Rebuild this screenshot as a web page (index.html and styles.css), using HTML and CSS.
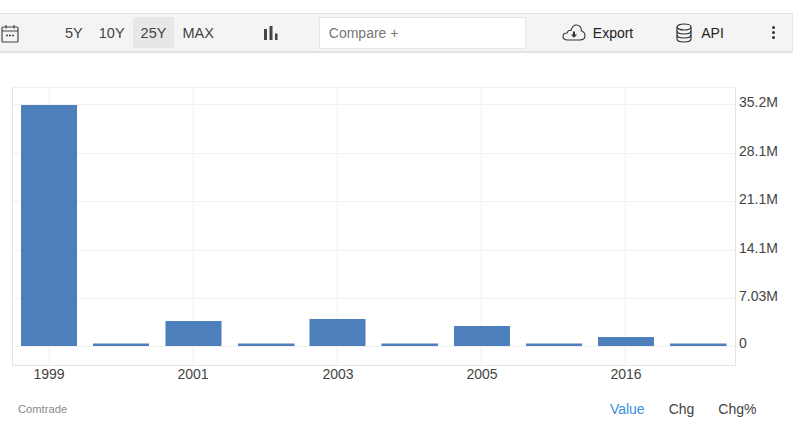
FILE: index.html
```html
<!DOCTYPE html>
<html lang="en">
<head>
    <meta charset="UTF-8">
    <title>Chart</title>
    <link rel="stylesheet" href="styles.css">
</head>
<body>
    <div class="toolbar">
        <svg class="icon-calendar" width="18" height="19" viewBox="0 0 18 19" fill="none" stroke="#444" stroke-width="1.2">
            <rect x="1" y="3" width="16" height="15" rx="1"/>
            <path d="M1 7h16M5 1v3.500M13 1v3.500"/>
            <path d="M5 11.500h2M8 11.500h2M11 11.500h2" stroke-width="1.400"/>
        </svg>
        <div class="ranges">
            <button class="range">5Y</button>
            <button class="range">10Y</button>
            <button class="range active">25Y</button>
            <button class="range">MAX</button>
        </div>
        <svg class="icon-bars" width="14" height="14" viewBox="0 0 14 14" fill="#444">
            <rect x="0" y="3" width="3" height="11"/>
            <rect x="5.500" y="0" width="3" height="14"/>
            <rect x="11" y="7.500" width="2.500" height="6.500"/>
        </svg>
        <input class="compare" type="text" placeholder="Compare +">
        <div class="tool tool-export">
            <svg width="24" height="17" viewBox="0 0 24 17" fill="none" stroke="#333" stroke-width="1.100">
                <path d="M5.500 16C2.800 16 1 14.500 1 12.500 1 10.500 2.800 9 5 9 5.800 6.800 7.600 6 9 6.400 10 3 12 1 14.400 1 17.400 1 19.600 3.400 19.400 6.800 21.600 7.800 23 9.600 23 11.600 23 14.200 21 16 18 16Z"/>
                <path d="M12 7.500v3.500" stroke-width="2"/>
                <path d="M8.800 10.400H15.200L12 13.800Z" fill="#333" stroke="none"/>
            </svg>
            <span>Export</span>
        </div>
        <div class="tool tool-api">
            <svg width="16" height="20" viewBox="0 0 16 20" fill="none" stroke="#333" stroke-width="1.200">
                <ellipse cx="8" cy="4" rx="7" ry="3"/>
                <path d="M1 4v12c0 1.700 3.100 3 7 3s7-1.300 7-3V4"/>
                <path d="M1 8c0 1.700 3.100 3 7 3s7-1.300 7-3M1 12c0 1.700 3.100 3 7 3s7-1.300 7-3"/>
            </svg>
            <span>API</span>
        </div>
        <div class="dots"><i></i><i></i><i></i></div>
    </div>

    <svg class="chart" width="800" height="300" viewBox="0 0 800 300">
        <g class="grid">
            <path d="M49 0V278M193 0V278M337 0V278M481 0V278M625 0V278"/>
            <path d="M13 17.500H735M13 66.500H735M13 114.500H735M13 163.500H735M13 211.500H735M13 259.500H735"/>
        </g>
        <g class="frame">
            <path d="M12.500 0V278.500H735.500V0"/>
            <path d="M12.500 0.500H735.500"/>
        </g>
        <g class="bars">
            <rect x="21" y="18" width="56" height="241"/>
            <rect x="93" y="256.500" width="56" height="2.500"/>
            <rect x="165.500" y="234" width="56" height="25"/>
            <rect x="238" y="256.500" width="56.500" height="2.500"/>
            <rect x="309.500" y="232" width="56" height="27"/>
            <rect x="381.500" y="256.500" width="56.500" height="2.500"/>
            <rect x="454" y="239" width="56" height="20"/>
            <rect x="526" y="256.500" width="56" height="2.500"/>
            <rect x="598" y="250" width="56" height="9"/>
            <rect x="670" y="256.500" width="56.500" height="2.500"/>
        </g>
        <g class="y-labels">
            <text x="739" y="20">35.2M</text>
            <text x="739" y="69">28.1M</text>
            <text x="739" y="117">21.1M</text>
            <text x="739" y="166">14.1M</text>
            <text x="739" y="214">7.03M</text>
            <text x="739" y="261">0</text>
        </g>
        <g class="x-labels">
            <text x="49" y="292">1999</text>
            <text x="193" y="292">2001</text>
            <text x="338" y="292">2003</text>
            <text x="482" y="292">2005</text>
            <text x="626" y="292">2016</text>
        </g>
    </svg>

    <div class="footer">
        <span class="source">Comtrade</span>
        <div class="modes">
            <span class="mode selected">Value</span>
            <span class="mode">Chg</span>
            <span class="mode">Chg%</span>
        </div>
    </div>
</body>
</html>
```

FILE: styles.css
```css
body {
    margin: 0;
    background: white;
    font-family: 'Liberation Sans', Arial, sans-serif;
    color: #444;
    overflow: hidden;
}

.toolbar {
    display: flex;
    align-items: center;
    box-sizing: border-box;
    width: 793px;
    height: 40px;
    margin-top: 13px;
    background: #f4f4f4;
    border-top: 1px solid #e2e2e2;
    border-bottom: 2px solid #e2e2e2;
    border-right: 1px solid #e8e8e8;
}

.icon-calendar {
    margin-top: 2px;
    margin-left: 1px;
}

.ranges {
    display: flex;
    margin-left: 38px;
}

.range {
    height: 31px;
    padding: 0 8px;
    border: none;
    background: none;
    color: #444;
    font-family: inherit;
    font-size: 14.500px;
}

.range.active {
    background: #e7e7e7;
}

.icon-bars {
    margin-left: 42px;
}

.compare {
    box-sizing: border-box;
    width: 207px;
    height: 32px;
    margin-left: 41px;
    padding: 0 9px;
    border: 1px solid #e6e6e6;
    background: white;
    font-family: inherit;
    font-size: 14px;
}

.compare::placeholder {
    color: #777;
    opacity: 1;
}

.tool {
    display: flex;
    align-items: center;
    gap: 7px;
    color: #222;
    font-size: 14px;
}

.tool-export {
    margin-left: 36px;
}

.tool-api {
    margin-left: 43px;
    gap: 9px;
}

.dots {
    display: flex;
    flex-direction: column;
    gap: 1.500px;
    margin-left: 48px;
}

.dots i {
    width: 3.500px;
    height: 3.500px;
    border-radius: 50%;
    background: #333;
}

.chart {
    display: block;
    margin-top: 34px;
}

.grid path {
    fill: none;
    stroke: #f1f1f1;
    stroke-width: 1;
}

.frame path {
    fill: none;
    stroke: #e4e4e4;
    stroke-width: 1;
}

.frame path:last-child {
    stroke: #f1f1f1;
}

.bars rect {
    fill: #4d7fbc;
}

.y-labels text,
.x-labels text {
    fill: #444;
    font-size: 14px;
}

.x-labels text {
    text-anchor: middle;
}

.footer {
    display: flex;
    justify-content: space-between;
    align-items: center;
    width: 738.500px;
    margin-top: 14px;
    padding-left: 18px;
}

.source {
    color: #888;
    font-size: 11.200px;
}

.modes {
    display: flex;
    gap: 24px;
}

.mode {
    color: #444;
    font-size: 14px;
}

.mode.selected {
    color: #3b8fdc;
}
```
